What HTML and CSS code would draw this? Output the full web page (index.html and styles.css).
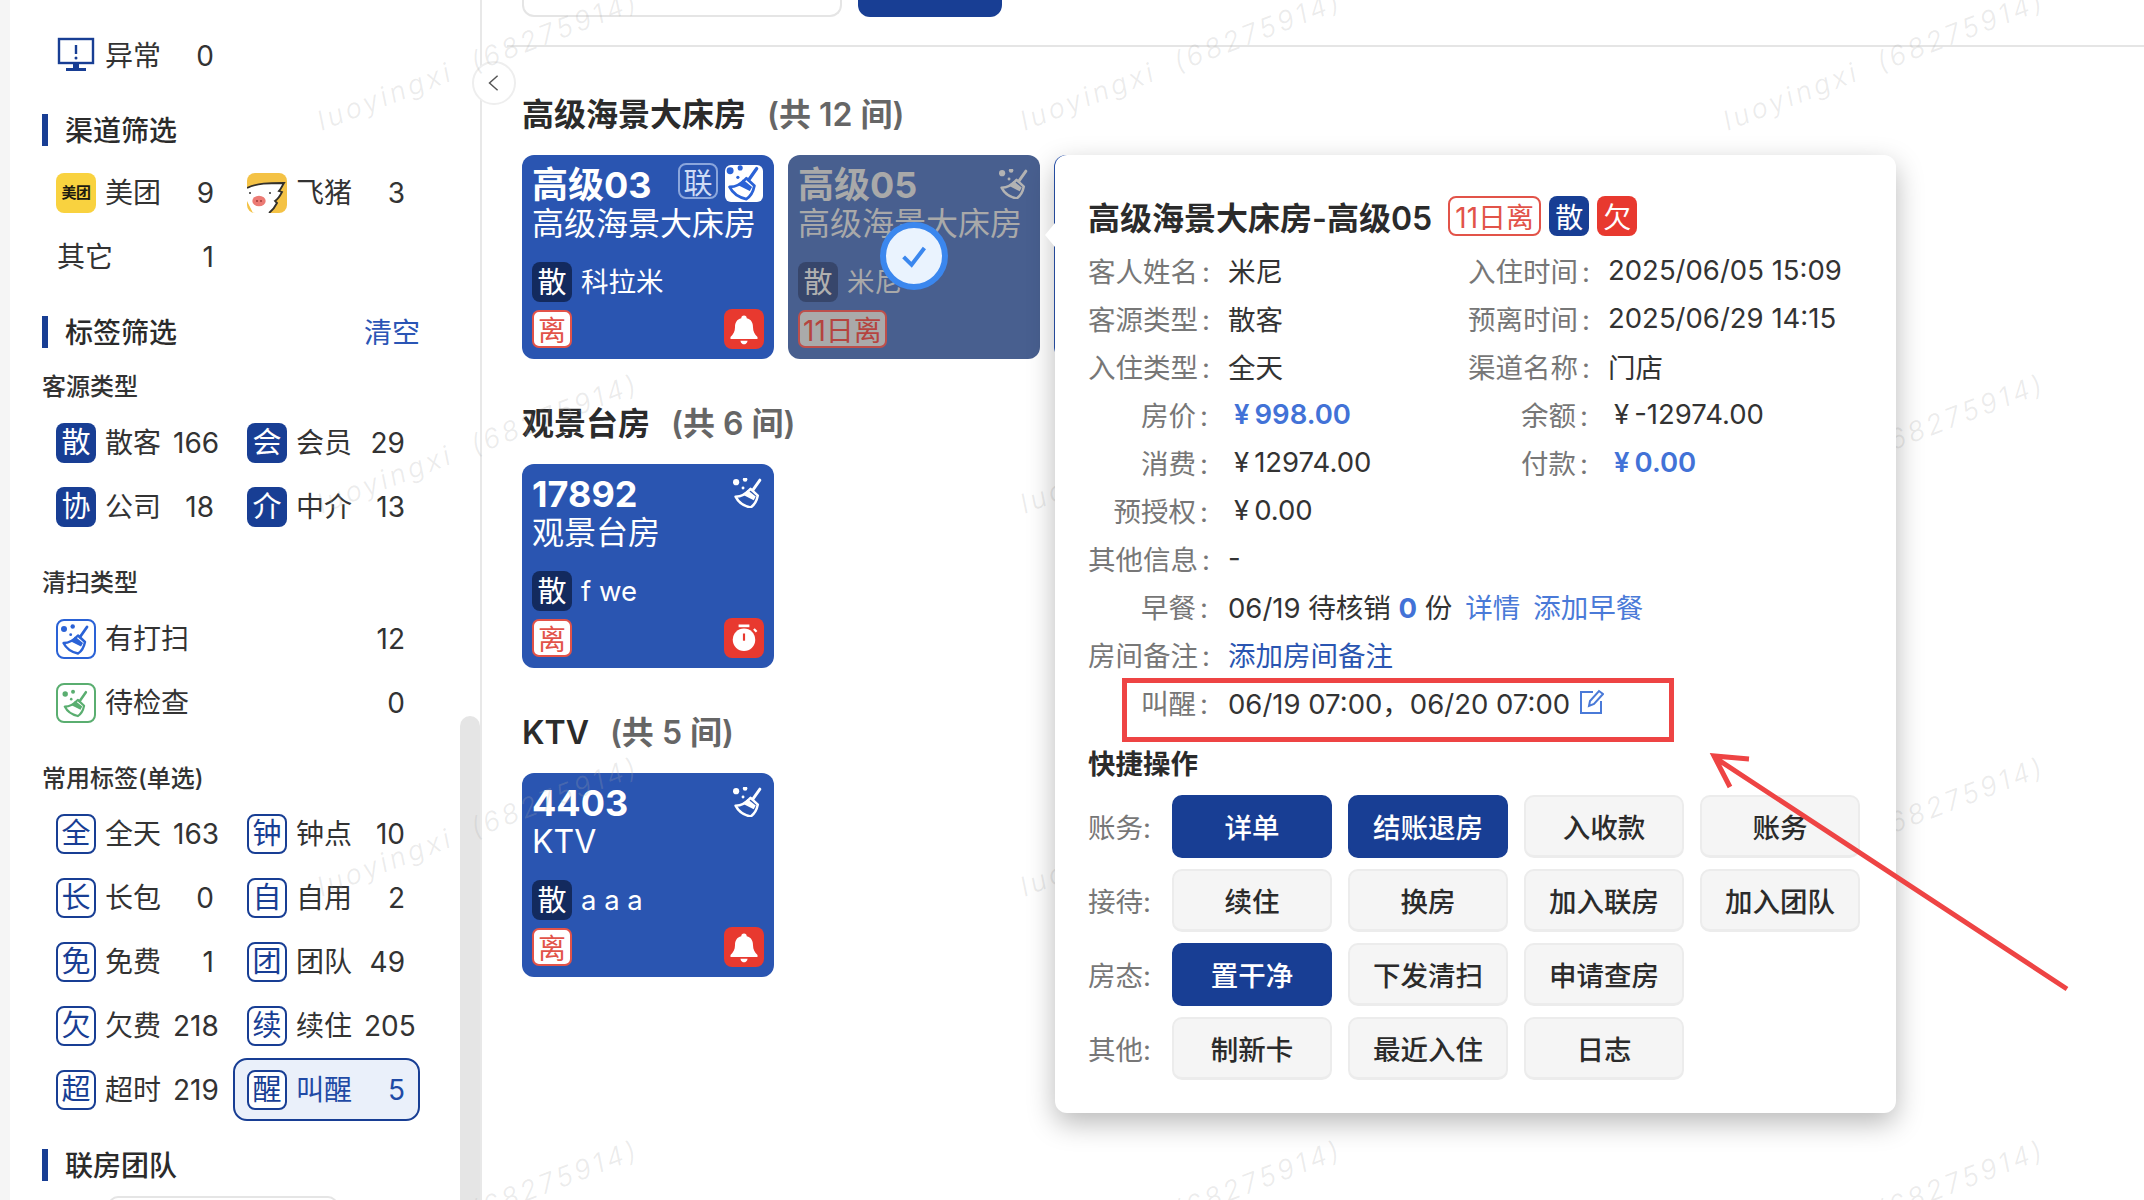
FILE: index.html
```html
<!DOCTYPE html>
<html lang="zh-CN">
<head>
<meta charset="utf-8">
<title>房态</title>
<link rel="stylesheet" href="styles.css">
</head>
<body>
<svg class="defs" width="0" height="0" aria-hidden="true">
  <defs>
    <g id="broom">
      <circle cx="8" cy="10" r="3" fill="currentColor"/>
      <circle cx="16.700" cy="7.500" r="2.200" fill="currentColor"/>
      <circle cx="14.700" cy="15.700" r="1.400" fill="currentColor"/>
      <path d="M31 8 L24 18" stroke="currentColor" stroke-width="2.800" stroke-linecap="round" fill="none"/>
      <path d="M7.500 24 C13 24 18 21 22 16.500 L29 23 C28 28 26 32 22 34.500 C15 33 10 29 7.500 24Z" fill="none" stroke="currentColor" stroke-width="2.400" stroke-linejoin="round"/>
      <path d="M15 22.500 L19 17.500 L27 24 L25 27.500Z" fill="currentColor"/>
    </g>
  </defs>
  <symbol id="bell" viewBox="0 0 40 40">
    <path d="M20 5 C22 5 23 6 23 8 C28 9 30 13 30 18 C30 23 32 26 35 29 L35 31 L5 31 L5 29 C8 26 10 23 10 18 C10 13 12 9 17 8 C17 6 18 5 20 5Z" fill="#fff"/>
    <path d="M16 33 L24 33 C23.500 36 21.500 37 20 37 C18.500 37 16.500 36 16 33Z" fill="#fff"/>
  </symbol>
  <symbol id="timer" viewBox="0 0 40 40">
    <rect x="14" y="5" width="12" height="3" fill="#fff"/>
    <circle cx="20" cy="22" r="12.500" fill="#fff"/>
    <rect x="18.800" y="15" width="2.400" height="8" fill="#e8392f"/>
    <path d="M31 10 L34 13" stroke="#fff" stroke-width="2.500"/>
  </symbol>
</svg>

<div class="app">
  <aside class="sidebar">
    <div class="tag-grid first">
      <div class="item">
        <svg class="icon" viewBox="0 0 40 40"><rect x="3" y="3" width="34" height="24" fill="none" stroke="#183e94" stroke-width="2.400"/><path d="M20 9v9" stroke="#183e94" stroke-width="2.400"/><circle cx="20" cy="22" r="1.500" fill="#183e94"/><path d="M17 28h6v4h-6zM10 32h20v3H10z" fill="#183e94"/></svg>
        <span class="lbl">异常</span><span class="count">0</span>
      </div>
    </div>

    <h2 class="sec-head"><span>渠道筛选</span></h2>
    <div class="tag-grid mt15">
      <div class="item"><span class="tile tile-mt">美团</span><span class="lbl">美团</span><span class="count">9</span></div>
      <div class="item">
        <svg class="icon round" viewBox="0 0 40 40"><rect width="40" height="40" fill="#f4c245"/><path d="M0 15 C10 10 22 10 37 10 C35 13 34 16 32 18 L35 19 C33 23 31 26 28 28 L30 30 C28 34 26 37 22 40 L6 40 L0 28Z" fill="#fff"/><path d="M0 15 C10 10 22 10 37 10 C35 13 34 16 32 18 L35 19 C33 23 31 26 28 28 L30 30 C28 34 26 37 22 40" fill="none" stroke="#33302a" stroke-width="1.800"/><ellipse cx="12" cy="28" rx="6.700" ry="5.300" fill="#ec7a74"/><circle cx="3" cy="20" r="1" fill="#333"/><circle cx="23" cy="20" r="1" fill="#333"/><circle cx="10" cy="28" r=".9" fill="#933"/><circle cx="14" cy="28" r=".9" fill="#933"/></svg>
        <span class="lbl">飞猪</span><span class="count">3</span>
      </div>
      <div class="item"><span class="lbl no-icon">其它</span><span class="count">1</span></div>
    </div>

    <h2 class="sec-head with-action"><span>标签筛选</span><a class="clear">清空</a></h2>
    <h3 class="sub-head first-sub">客源类型</h3>
    <div class="tag-grid mt9">
      <div class="item"><span class="tile tile-solid">散</span><span class="lbl">散客</span><span class="count tri">166</span></div>
      <div class="item"><span class="tile tile-solid">会</span><span class="lbl">会员</span><span class="count">29</span></div>
      <div class="item"><span class="tile tile-solid">协</span><span class="lbl">公司</span><span class="count">18</span></div>
      <div class="item"><span class="tile tile-solid">介</span><span class="lbl">中介</span><span class="count">13</span></div>
    </div>

    <h3 class="sub-head">清扫类型</h3>
    <div class="tag-grid mt9">
      <div class="item span2"><span class="tile tile-clean"><svg class="tile-svg" viewBox="2 2 36 36"><use href="#broom"/></svg></span><span class="lbl">有打扫</span><span class="count">12</span></div>
      <div class="item span2"><span class="tile tile-check"><svg class="tile-svg" viewBox="0 0 40 40"><use href="#broom"/></svg></span><span class="lbl">待检查</span><span class="count">0</span></div>
    </div>

    <h3 class="sub-head">常用标签(单选)</h3>
    <div class="tag-grid mt8">
      <div class="item"><span class="tile tile-line">全</span><span class="lbl">全天</span><span class="count tri">163</span></div>
      <div class="item"><span class="tile tile-line">钟</span><span class="lbl">钟点</span><span class="count">10</span></div>
      <div class="item"><span class="tile tile-line">长</span><span class="lbl">长包</span><span class="count">0</span></div>
      <div class="item"><span class="tile tile-line">自</span><span class="lbl">自用</span><span class="count">2</span></div>
      <div class="item"><span class="tile tile-line">免</span><span class="lbl">免费</span><span class="count">1</span></div>
      <div class="item"><span class="tile tile-line">团</span><span class="lbl">团队</span><span class="count">49</span></div>
      <div class="item"><span class="tile tile-line">欠</span><span class="lbl">欠费</span><span class="count tri">218</span></div>
      <div class="item"><span class="tile tile-line">续</span><span class="lbl">续住</span><span class="count tri">205</span></div>
      <div class="item"><span class="tile tile-line">超</span><span class="lbl">超时</span><span class="count tri">219</span></div>
      <div class="item active"><span class="tile tile-line">醒</span><span class="lbl">叫醒</span><span class="count">5</span></div>
    </div>

    <h2 class="sec-head last-head"><span>联房团队</span></h2>
    <div class="side-input"></div>
    <div class="scroll-thumb"></div>
  </aside>

  <main class="main">
    <div class="top-bar"><div class="top-input"></div><div class="top-btn"></div></div>

    <section class="room-sec">
      <h2 class="room-head">高级海景大床房<span class="room-num">(共 12 间)</span></h2>
      <div class="cards">
        <article class="card">
          <div class="card-top">
            <div class="card-no">高级03</div>
            <span class="link-tag">联</span>
            <span class="clean-tag"><svg class="tile-svg" viewBox="4 5 32 32"><use href="#broom"/></svg></span>
          </div>
          <div class="card-type">高级海景大床房</div>
          <div class="card-guest"><span class="tile tile-dark">散</span><span class="guest-name">科拉米</span></div>
          <div class="card-bottom"><span class="leave">离</span><span class="alert"><svg class="alert-svg"><use href="#bell"/></svg></span></div>
        </article>
        <article class="card card-dim">
          <div class="card-top">
            <div class="card-no">高级05</div>
            <svg class="card-broom" viewBox="5 6 29 29"><use href="#broom"/></svg>
          </div>
          <div class="card-type">高级海景大床房</div>
          <div class="card-guest"><span class="tile tile-dark">散</span><span class="guest-name">米尼</span></div>
          <div class="card-bottom"><span class="leave">11日离</span></div>
          <span class="selected"><svg viewBox="0 0 40 40"><path d="M7 21 L17 31 L33 10" fill="none" stroke="#3b87ee" stroke-width="5"/></svg></span>
        </article>
        <article class="card"></article>
      </div>
    </section>

    <section class="room-sec">
      <h2 class="room-head">观景台房<span class="room-num">(共 6 间)</span></h2>
      <div class="cards">
        <article class="card">
          <div class="card-top"><div class="card-no">17892</div><svg class="card-broom" viewBox="5 6 29 29"><use href="#broom"/></svg></div>
          <div class="card-type">观景台房</div>
          <div class="card-guest"><span class="tile tile-dark">散</span><span class="guest-name">f we</span></div>
          <div class="card-bottom"><span class="leave">离</span><span class="alert"><svg class="alert-svg"><use href="#timer"/></svg></span></div>
        </article>
      </div>
    </section>

    <section class="room-sec">
      <h2 class="room-head">KTV<span class="room-num">(共 5 间)</span></h2>
      <div class="cards">
        <article class="card">
          <div class="card-top"><div class="card-no">4403</div><svg class="card-broom" viewBox="5 6 29 29"><use href="#broom"/></svg></div>
          <div class="card-type">KTV</div>
          <div class="card-guest"><span class="tile tile-dark">散</span><span class="guest-name">a a a</span></div>
          <div class="card-bottom"><span class="leave">离</span><span class="alert"><svg class="alert-svg"><use href="#bell"/></svg></span></div>
        </article>
      </div>
    </section>

    <div class="popover">
      <div class="pop-arrow"></div>
      <div class="pop-title">
        <h2>高级海景大床房-高级05</h2>
        <span class="pop-tag tag-out">11日离</span>
        <span class="pop-tag tag-navy">散</span>
        <span class="pop-tag tag-red">欠</span>
      </div>
      <div class="info">
        <div class="info-row"><div class="cell"><span class="k">客人姓名<i>:</i></span><span class="v">米尼</span></div><div class="cell"><span class="k">入住时间<i>:</i></span><span class="v">2025/06/05 15:09</span></div></div>
        <div class="info-row"><div class="cell"><span class="k">客源类型<i>:</i></span><span class="v">散客</span></div><div class="cell"><span class="k">预离时间<i>:</i></span><span class="v">2025/06/29 14:15</span></div></div>
        <div class="info-row"><div class="cell"><span class="k">入住类型<i>:</i></span><span class="v">全天</span></div><div class="cell"><span class="k">渠道名称<i>:</i></span><span class="v">门店</span></div></div>
        <div class="info-row"><div class="cell"><span class="k">房价<i>:</i></span><span class="v money strong"><span class="yen">¥</span>998.00</span></div><div class="cell"><span class="k">余额<i>:</i></span><span class="v money"><span class="yen">¥</span>-12974.00</span></div></div>
        <div class="info-row"><div class="cell"><span class="k">消费<i>:</i></span><span class="v money"><span class="yen">¥</span>12974.00</span></div><div class="cell"><span class="k">付款<i>:</i></span><span class="v money strong"><span class="yen">¥</span>0.00</span></div></div>
        <div class="info-row"><div class="cell"><span class="k">预授权<i>:</i></span><span class="v money"><span class="yen">¥</span>0.00</span></div></div>
        <div class="info-row"><div class="cell"><span class="k">其他信息<i>:</i></span><span class="v">-</span></div></div>
        <div class="info-row"><div class="cell cell-full"><span class="k">早餐<i>:</i></span><span class="v">06/19 待核销 <b class="zero">0</b> 份<a class="lnk">详情</a><a class="lnk">添加早餐</a></span></div></div>
        <div class="info-row"><div class="cell cell-full"><span class="k">房间备注<i>:</i></span><span class="v"><a class="lnk-dark">添加房间备注</a></span></div></div>
        <div class="info-row"><div class="cell cell-full"><span class="k">叫醒<i>:</i></span><span class="v wake">06/19 07:00，06/20 07:00<svg class="edit" viewBox="0 0 26 26"><path d="M15 3H3v21h20V12" fill="none" stroke="#4a7ad8" stroke-width="2"/><path d="M11 17l1-5L21 2l4 3-9 10z" fill="none" stroke="#4a7ad8" stroke-width="2"/></svg></span></div></div>
      </div>
      <h3 class="quick">快捷操作</h3>
      <div class="actions">
        <div class="act-row"><span class="act-label">账务:</span><button class="btn btn-pri">详单</button><button class="btn btn-pri">结账退房</button><button class="btn">入收款</button><button class="btn">账务</button></div>
        <div class="act-row"><span class="act-label">接待:</span><button class="btn">续住</button><button class="btn">换房</button><button class="btn">加入联房</button><button class="btn">加入团队</button></div>
        <div class="act-row"><span class="act-label">房态:</span><button class="btn btn-pri">置干净</button><button class="btn">下发清扫</button><button class="btn">申请查房</button></div>
        <div class="act-row"><span class="act-label">其他:</span><button class="btn">制新卡</button><button class="btn">最近入住</button><button class="btn">日志</button></div>
      </div>
    </div>
  </main>

  <button class="collapse" aria-label="收起"><svg viewBox="0 0 20 20"><path d="M14 2L5 10l9 8" fill="none" stroke="#555" stroke-width="1.600"/></svg></button>

  <div class="watermarks" aria-hidden="true">
    <span>luoyingxi (68275914)</span><span>luoyingxi (68275914)</span><span>luoyingxi (68275914)</span>
    <span>luoyingxi (68275914)</span><span>luoyingxi (68275914)</span><span>luoyingxi (68275914)</span>
    <span>luoyingxi (68275914)</span><span>luoyingxi (68275914)</span><span>luoyingxi (68275914)</span>
    <span>luoyingxi (68275914)</span><span>luoyingxi (68275914)</span><span>luoyingxi (68275914)</span>
  </div>

  <div class="note-box"></div>
  <svg class="note-arrow" viewBox="0 0 2144 1200"><path d="M2067 989L1714 757M1749 759L1714 756L1730 787" fill="none" stroke="#ee4444" stroke-width="5"/></svg>
</div>
</body>
</html>
```

FILE: styles.css
```css
* { box-sizing: border-box; }
html, body { margin: 0; height: 100%; }
body {
  width: 2144px;
  height: 1200px;
  overflow: hidden;
  background: #f5f5f5;
  color: #333;
  font-family: Inter, "Noto Sans CJK SC", sans-serif;
  font-size: 27.5px;
}
.defs { position: absolute; }
h2, h3 { margin: 0; }
.app { position: relative; display: flex; width: 2144px; height: 1200px; overflow: hidden; }

/* sidebar */
.sidebar {
  position: relative;
  flex: none;
  width: 472px;
  margin-left: 10px;
  height: 1200px;
  background: #fff;
  border-right: 2px solid #e8e8e8;
  padding: 24px 0 0 32px;
  overflow: hidden;
  font-size: 28px;
}
.tag-grid { display: grid; grid-template-columns: 187px 187px; grid-auto-rows: 63px; gap: 1px 4px; }
.mt15 { margin-top: 15px; }
.mt9 { margin-top: 9px; }
.mt8 { margin-top: 8px; }
.item {
  display: flex;
  align-items: center;
  padding: 0 13px 0 12px;
  border: 2px solid transparent;
  border-radius: 14px;
  color: #333;
}
.span2 { grid-column: span 2; }
.item.active { background: #eaf0fa; border-color: #183e94; color: #1f4aa5; }
.icon { flex: none; width: 40px; height: 40px; }
.icon.round { border-radius: 8px; }
.lbl { margin-left: 9px; white-space: nowrap; line-height: 36px; }
.lbl.no-icon { margin-left: 1px; }
.count { margin-left: auto; line-height: 36px; }
.count.tri { margin-left: 12px; margin-right: auto; }

.tile {
  flex: none;
  display: flex;
  align-items: center;
  justify-content: center;
  width: 40px;
  height: 40px;
  border-radius: 8px;
  font-size: 29px;
  line-height: 1;
}
.tile-solid { background: #183e94; color: #fff; }
.tile-line { border: 2px solid #183e94; color: #183e94; background: #fff; }
.tile-mt { background: #f9d23f; color: #1c1a10; font-size: 15px; font-weight: 700; letter-spacing: -.5px; }
.tile-clean { border: 2px solid #2a62d6; color: #2a62d6; background: #fff; }
.tile-check { border: 2px solid #5aae70; color: #5aae70; background: #fff; }
.tile-svg { display: block; width: 100%; height: 100%; }
.tile-dark { background: #132a5e; color: #fff; }

.sec-head {
  display: flex;
  align-items: center;
  height: 32px;
  margin-top: 27px;
  padding: 0 0 3px 17px;
  border-left: 6px solid #183e94;
  font-size: 28px;
  font-weight: 500;
  color: #2b2b2b;
}
.with-action { margin-top: 28px; justify-content: space-between; width: 378px; }
.clear { color: #2a55b5; font-weight: 400; }
.last-head { margin-top: 28px; }
.sub-head { height: 32px; margin-top: 28px; font-size: 24px; font-weight: 500; line-height: 33px; color: #333; }
.first-sub { margin-top: 22px; }
.side-input { width: 230px; height: 60px; margin: 15px 0 0 66px; border: 2px solid #e5e5e5; border-radius: 10px; }
.scroll-thumb {
  position: absolute;
  right: 0;
  top: 716px;
  width: 20px;
  height: 484px;
  background: #e5e5e5;
  border-radius: 10px 10px 0 0;
}
.collapse {
  position: absolute;
  left: 472px;
  top: 61px;
  width: 44px;
  height: 44px;
  padding: 11px;
  background: #fff;
  border: 2px solid #eee;
  border-radius: 50%;
}
.collapse svg { display: block; width: 100%; height: 100%; }

/* main */
.main { position: relative; flex: 1; min-width: 0; height: 1200px; padding-left: 40px; background: #fff; }
.top-bar {
  display: flex;
  align-items: flex-start;
  gap: 16px;
  height: 47px;
  margin-left: -15px;
  padding-left: 15px;
  border-bottom: 2px solid #e5e5e5;
}
.top-input { width: 320px; height: 17px; border: 2px solid #e5e5e5; border-top: 0; border-radius: 0 0 12px 12px; }
.top-btn { width: 144px; height: 17px; background: #183e94; border-radius: 0 0 12px 12px; }
.room-sec { margin-bottom: 45px; }
.room-sec:first-of-type { padding-top: 48px; }
.room-head { height: 40px; font-size: 32px; font-weight: 600; line-height: 40px; color: #2b2b2b; }
.room-num { margin-left: 21px; color: #666; }
.cards { display: flex; gap: 14px; margin-top: 20px; }
.card {
  position: relative;
  flex: none;
  width: 252px;
  height: 204px;
  padding: 10px;
  background: #2a55b1;
  border-radius: 12px;
  color: #fff;
}
.card-top { display: flex; align-items: flex-start; height: 40px; }
.card-no { margin-right: auto; font-size: 36px; font-weight: 700; line-height: 40px; white-space: nowrap; }
.card-type { height: 38px; font-size: 32px; line-height: 38px; white-space: nowrap; }
.card-guest { display: flex; align-items: center; gap: 9px; height: 40px; margin-top: 19px; white-space: nowrap; }
.guest-name { line-height: 38px; padding-bottom: 1px; }
.card-bottom { display: flex; align-items: center; justify-content: space-between; height: 39px; margin-top: 7px; }
.link-tag {
  display: flex;
  align-items: center;
  justify-content: center;
  width: 40px;
  height: 36px;
  margin: -2px 7px 0 0;
  border: 2px solid #8ba6dc;
  border-radius: 8px;
  color: #cfdcf5;
  font-size: 29px;
}
.clean-tag { width: 38px; height: 37px; margin-right: 1px; background: #fff; border-radius: 6px; color: #2a62d6; }
.card-broom { flex: none; width: 30px; height: 30px; margin: 4px 1px 0 0; color: #fff; }
.leave {
  display: flex;
  align-items: center;
  justify-content: center;
  min-width: 40px;
  height: 38px;
  padding: 0 3px;
  background: #fff;
  border: 2px solid #e25349;
  border-radius: 7px;
  color: #e25349;
  font-size: 28px;
}
.alert { width: 40px; height: 40px; padding: 2px; background: #e8392f; border-radius: 8px; }
.alert-svg { display: block; width: 100%; height: 100%; }
.card-dim { background: #485f8f; color: #a9a9a9; }
.card-dim .card-broom { color: #b3b3b3; }
.card-dim .tile-dark { background: #37466b; color: #b0b0b0; }
.card-dim .leave { background: #aaa; border-color: #bd4f4b; color: #b5443f; }
.selected {
  position: absolute;
  left: 92px;
  top: 67px;
  width: 68px;
  height: 68px;
  padding: 12px;
  background: #eaf3fe;
  border: 6px solid #3b87ee;
  border-radius: 50%;
}
.selected svg { display: block; }

/* popover */
.popover {
  position: absolute;
  z-index: 3;
  left: 573px;
  top: 155px;
  width: 841px;
  height: 958px;
  padding: 41px 0 0 33px;
  background: #fff;
  border-radius: 12px;
  box-shadow: 0 10px 28px rgba(0, 0, 0, .28);
}
.pop-arrow {
  position: absolute;
  left: -10px;
  top: 68px;
  width: 0;
  height: 0;
  border-top: 12px solid transparent;
  border-bottom: 12px solid transparent;
  border-right: 10px solid #fff;
}
.pop-title { display: flex; align-items: center; height: 40px; }
.pop-title h2 { font-size: 32px; font-weight: 600; color: #2b2b2b; margin-right: 16px; white-space: nowrap; }
.pop-tag {
  display: flex;
  align-items: center;
  justify-content: center;
  height: 40px;
  margin-right: 8px;
  border-radius: 8px;
  font-size: 28px;
}
.tag-out { width: 93px; border: 2px solid #e25349; color: #e25349; }
.tag-navy { width: 40px; background: #183e94; color: #fff; }
.tag-red { width: 40px; background: #e8392f; color: #fff; }
.info { margin-top: 10px; }
.info-row { display: flex; height: 48px; align-items: center; }
.cell { display: flex; align-items: center; width: 380px; }
.cell-full { width: 700px; }
.k { flex: none; width: 124px; text-align: right; color: #777; white-space: nowrap; }
.k i { display: inline-block; width: 16px; padding-left: 4px; font-style: normal; text-align: left; }
.v { margin-left: 16px; color: #333; white-space: nowrap; }
.money { margin-left: 22px; }
.yen { margin-right: 5px; }
.strong { color: #4272d7; font-weight: 600; }
.zero { color: #4272d7; font-weight: 700; }
.lnk { margin-left: 13px; color: #4a7ad8; }
.lnk-dark { color: #2a55b1; }
.wake { display: flex; align-items: center; }
.edit { width: 26px; height: 26px; margin: 0 0 0 8px; }
.quick { height: 40px; margin-top: 18px; font-size: 27.5px; font-weight: 600; line-height: 40px; color: #2b2b2b; }
.actions { display: flex; flex-direction: column; gap: 11px; margin-top: 11px; }
.act-row { display: flex; align-items: center; gap: 16px; }
.act-label { width: 68px; padding-bottom: 2px; color: #777; white-space: nowrap; }
.btn {
  width: 160px;
  height: 63px;
  padding: 0;
  background: #f5f5f5;
  border: 2px solid #ececec;
  border-bottom-width: 3px;
  border-radius: 10px;
  color: #2b2b2b;
  font: 500 27.5px Inter, "Noto Sans CJK SC", sans-serif;
}
.btn-pri { background: #183e94; border-color: #183e94; color: #fff; }

/* watermark */
.watermarks {
  position: absolute;
  z-index: 2;
  left: 127px;
  top: -131px;
  display: grid;
  grid-template-columns: repeat(3, 703px);
  grid-auto-rows: 383px;
  place-items: center;
  pointer-events: none;
}
.watermarks span {
  transform: rotate(-21deg);
  color: rgba(170, 170, 170, .24);
  font-size: 27px;
  font-style: italic;
  font-weight: 300;
  letter-spacing: 3.500px;
  word-spacing: 10px;
  white-space: nowrap;
}

/* annotation */
.note-box {
  position: absolute;
  z-index: 4;
  left: 1122px;
  top: 678px;
  width: 552px;
  height: 64px;
  border: 5px solid #ee4444;
}
.note-arrow { position: absolute; z-index: 4; left: 0; top: 0; width: 2144px; height: 1200px; pointer-events: none; }
```
